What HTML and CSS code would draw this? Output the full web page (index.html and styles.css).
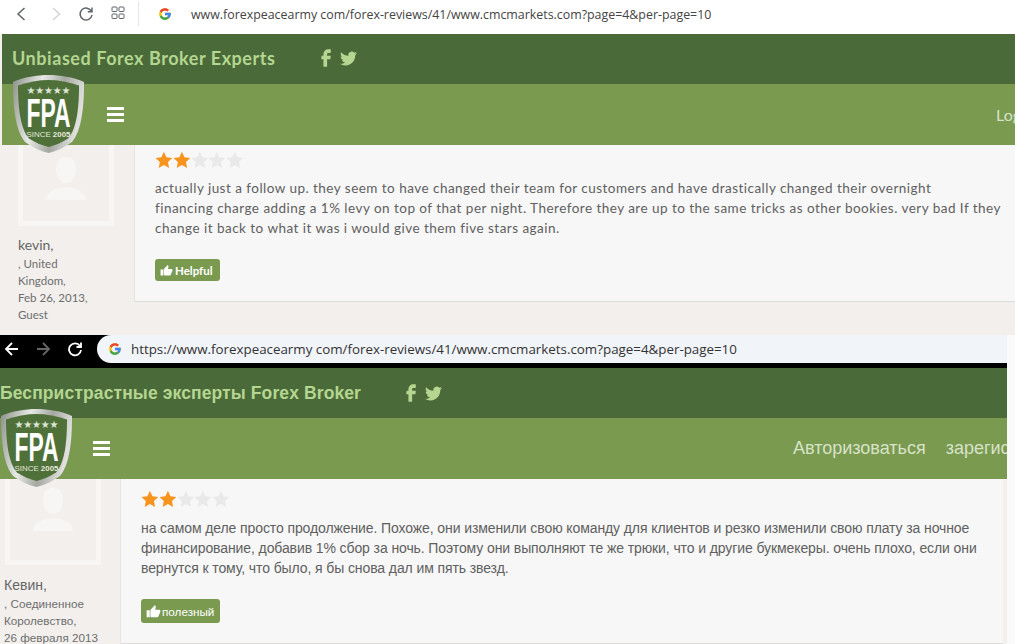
FILE: index.html
```html
<!DOCTYPE html>
<html lang="en">
<head>
<meta charset="utf-8">
<title>FPA review comparison</title>
<link rel="stylesheet" href="styles.css">
</head>
<body>
<svg class="defs" width="0" height="0" aria-hidden="true">
  <defs>
    <symbol id="star" viewBox="0 0 24 24"><path d="M12 1l3.4 7.3 7.9 1-5.8 5.5 1.5 7.9L12 18.8l-7 3.9 1.5-7.9L.7 9.3l7.9-1z"/></symbol>
    <symbol id="fb" viewBox="0 0 24 24"><path d="M9.198 21.5h4v-8.01h3.604l.396-3.98h-4V7.5a1 1 0 0 1 1-1h3v-4h-3a5 5 0 0 0-5 5v2.01h-2l-.396 3.98h2.396v8.01Z"/></symbol>
    <symbol id="tw" viewBox="0 0 24 24"><path d="M23.953 4.57a10 10 0 01-2.825.775 4.958 4.958 0 002.163-2.723c-.951.555-2.005.959-3.127 1.184a4.92 4.92 0 00-8.384 4.482C7.69 8.095 4.067 6.13 1.64 3.162a4.822 4.822 0 00-.666 2.475c0 1.71.87 3.213 2.188 4.096a4.904 4.904 0 01-2.228-.616v.06a4.923 4.923 0 003.946 4.827 4.996 4.996 0 01-2.212.085 4.936 4.936 0 004.604 3.417 9.867 9.867 0 01-6.102 2.105c-.39 0-.779-.023-1.17-.067a13.995 13.995 0 007.557 2.209c9.053 0 13.998-7.496 13.998-13.985 0-.21 0-.42-.015-.63A9.935 9.935 0 0024 4.59z"/></symbol>
    <symbol id="thumb" viewBox="0 0 24 24"><path d="M1 21h5V10H1v11zm22-10c0-1.1-.9-2-2-2h-6.3l1-4.600c0-.4-.2-.8-.4-1.100L14 2 7.600 8.600c-.4.4-.6.9-.6 1.400v9c0 1.100.9 2 2 2h9c.8 0 1.500-.5 1.800-1.200l3-7c.1-.2.2-.5.2-.7v-1.100z"/></symbol>
    <symbol id="g" viewBox="0 0 48 48">
      <path fill="#fbbc05" d="M43.611 20.083H42V20H24v8h11.303c-1.649 4.657-6.08 8-11.303 8-6.627 0-12-5.373-12-12s5.373-12 12-12c3.059 0 5.842 1.154 7.961 3.039l5.657-5.657C34.046 6.053 29.268 4 24 4 12.955 4 4 12.955 4 24s8.955 20 20 20 20-8.955 20-20c0-1.341-.138-2.65-.389-3.917z"/>
      <path fill="#ea4335" d="M6.306 14.691l6.571 4.819C14.655 15.108 18.961 12 24 12c3.059 0 5.842 1.154 7.961 3.039l5.657-5.657C34.046 6.053 29.268 4 24 4 16.318 4 9.656 8.337 6.306 14.691z"/>
      <path fill="#34a853" d="M24 44c5.166 0 9.86-1.977 13.409-5.192l-6.19-5.238A11.91 11.91 0 0124 36c-5.202 0-9.619-3.317-11.283-7.946l-6.522 5.025C9.505 39.556 16.227 44 24 44z"/>
      <path fill="#4285f4" d="M43.611 20.083H42V20H24v8h11.303a12.04 12.04 0 01-4.087 5.571l6.19 5.238C36.971 39.205 44 34 44 24c0-1.341-.138-2.65-.389-3.917z"/>
    </symbol>
    <symbol id="avatar" viewBox="0 0 60 60"><path d="M30 2c-8 0-12 6-12 15s5 17 12 17 12-8 12-17S38 2 30 2zM6 54c0-9 9-13 19-15h10c10 2 19 6 19 15z"/></symbol>
    <linearGradient id="silver" x1="0" y1="0" x2="1" y2="0.25">
      <stop offset="0" stop-color="#8b9187"/><stop offset=".4" stop-color="#e8e9e6"/><stop offset=".7" stop-color="#a4a8a1"/><stop offset="1" stop-color="#dfe0dd"/>
    </linearGradient>
  </defs>
</svg>

<section class="shot shot-en">
  <div class="browser-light">
    <svg class="ctl ctl-back" viewBox="0 0 12 16"><path d="M9.500 2L3 8l6.500 6"/></svg>
    <svg class="ctl ctl-fwd" viewBox="0 0 12 16"><path d="M3 2l6.500 6L3 14"/></svg>
    <svg class="ctl ctl-reload" viewBox="0 0 16 16"><path d="M13.500 5.500A6 6 0 1 0 14 9M14 1.500v4.200H9.800"/></svg>
    <svg class="ctl ctl-grid" viewBox="0 0 14 14"><rect x="1" y="1" width="5" height="4.500" rx=".8"/><rect x="8" y="1" width="5" height="4.500" rx=".8"/><rect x="1" y="8" width="5" height="4.500" rx=".8"/><rect x="8" y="8" width="5" height="4.500" rx=".8"/></svg>
    <span class="divider"></span>
    <svg class="gicon gicon-en"><use href="#g"/></svg>
    <span class="url url-en">www.forexpeacearmy com/forex-reviews/41/www.cmcmarkets.com?page=4&amp;per-page=10</span>
  </div>
  <div class="site site-en">
    <header class="brand">
      <span class="brand-title">Unbiased Forex Broker Experts</span>
      <svg class="social social-fb"><use href="#fb"/></svg>
      <svg class="social social-tw"><use href="#tw"/></svg>
    </header>
    <nav class="nav">
      <span class="burger"><i></i><i></i><i></i></span>
      <span class="nav-links"><span>Login</span></span>
    </nav>
    <svg class="logo" viewBox="0 0 73 80">
      <path class="logo-rim" d="M36.500 1C25 1 12 3 1 8c0 24 2 48 12 60 7 5 15 9 23.500 11C45 77 53 73 60 68c10-12 12-36 12-60C61 3 48 1 36.500 1z"/>
      <path class="logo-face" d="M36.500 6C27 6 16 8 6 11.500c0 21 2 43 11 53 6 4 13 7 19.500 8.500C43 71.500 50 68.500 56 64.500c9-10 11-32 11-53C57 8 46 6 36.500 6z"/>
      <text class="logo-stars" x="36.500" y="20" text-anchor="middle" textLength="44">★★★★★</text>
      <text class="logo-fpa" x="36.500" y="53" text-anchor="middle" textLength="44" lengthAdjust="spacingAndGlyphs">FPA</text>
      <text class="logo-since" x="36.500" y="63" text-anchor="middle" textLength="44" lengthAdjust="spacingAndGlyphs"><tspan class="logo-thin">SINCE</tspan> 2005</text>
    </svg>
    <div class="review">
      <aside class="side">
        <div class="avatar"><svg><use href="#avatar"/></svg></div>
        <div class="author">kevin,</div>
        <div class="meta">, United<br>Kingdom,<br>Feb 26, 2013,<br>Guest</div>
      </aside>
      <article class="card">
        <div class="stars">
          <svg class="on"><use href="#star"/></svg><svg class="on"><use href="#star"/></svg><svg><use href="#star"/></svg><svg><use href="#star"/></svg><svg><use href="#star"/></svg>
        </div>
        <p class="body">actually just a follow up. they seem to have changed their team for customers and have drastically changed their overnight<br>financing charge adding a 1% levy on top of that per night. Therefore they are up to the same tricks as other bookies. very bad If they<br>change it back to what it was i would give them five stars again.</p>
        <button class="helpful" type="button"><svg><use href="#thumb"/></svg>Helpful</button>
      </article>
    </div>
  </div>
</section>

<section class="shot shot-ru">
  <div class="browser-dark">
    <svg class="dctl dctl-back" viewBox="0 0 16 16"><path d="M14 8H2M8 2L2 8l6 6"/></svg>
    <svg class="dctl dctl-fwd" viewBox="0 0 16 16"><path d="M2 8h12M8 2l6 6-6 6"/></svg>
    <svg class="dctl dctl-reload" viewBox="0 0 16 16"><path d="M13 5a6 6 0 1 0 1 4M14 1.500v4.500H9.500"/></svg>
    <div class="pill">
      <svg class="gicon gicon-ru"><use href="#g"/></svg>
      <span class="url url-ru">https://www.forexpeacearmy com/forex-reviews/41/www.cmcmarkets.com?page=4&amp;per-page=10</span>
    </div>
  </div>
  <div class="site site-ru">
    <header class="brand">
      <span class="brand-title">Беспристрастные эксперты Forex Broker</span>
      <svg class="social social-fb"><use href="#fb"/></svg>
      <svg class="social social-tw"><use href="#tw"/></svg>
    </header>
    <nav class="nav">
      <span class="burger"><i></i><i></i><i></i></span>
      <span class="nav-links"><span>Авторизоваться</span><span>зарегистрироваться</span></span>
    </nav>
    <svg class="logo" viewBox="0 0 73 80">
      <path class="logo-rim" d="M36.500 1C25 1 12 3 1 8c0 24 2 48 12 60 7 5 15 9 23.500 11C45 77 53 73 60 68c10-12 12-36 12-60C61 3 48 1 36.500 1z"/>
      <path class="logo-face" d="M36.500 6C27 6 16 8 6 11.500c0 21 2 43 11 53 6 4 13 7 19.500 8.500C43 71.500 50 68.500 56 64.500c9-10 11-32 11-53C57 8 46 6 36.500 6z"/>
      <text class="logo-stars" x="36.500" y="20" text-anchor="middle" textLength="44">★★★★★</text>
      <text class="logo-fpa" x="36.500" y="53" text-anchor="middle" textLength="44" lengthAdjust="spacingAndGlyphs">FPA</text>
      <text class="logo-since" x="36.500" y="63" text-anchor="middle" textLength="44" lengthAdjust="spacingAndGlyphs"><tspan class="logo-thin">SINCE</tspan> 2005</text>
    </svg>
    <div class="review">
      <aside class="side">
        <div class="avatar"><svg><use href="#avatar"/></svg></div>
        <div class="author">Кевин,</div>
        <div class="meta">, Соединенное<br>Королевство,<br>26 февраля 2013</div>
      </aside>
      <article class="card">
        <div class="stars">
          <svg class="on"><use href="#star"/></svg><svg class="on"><use href="#star"/></svg><svg><use href="#star"/></svg><svg><use href="#star"/></svg><svg><use href="#star"/></svg>
        </div>
        <p class="body">на самом деле просто продолжение. Похоже, они изменили свою команду для клиентов и резко изменили свою плату за ночное финансирование, добавив 1% сбор за ночь. Поэтому они выполняют те же трюки, что и другие букмекеры. очень плохо, если они вернутся к тому, что было, я бы снова дал им пять звезд.</p>
        <button class="helpful" type="button"><svg><use href="#thumb"/></svg>полезный</button>
      </article>
    </div>
  </div>
</section>
</body>
</html>
```
FILE: styles.css
```css
* { box-sizing: border-box; }
html, body { margin: 0; padding: 0; }
body { width: 1015px; height: 644px; overflow: hidden; background: #fafafa; color: #555; }
.defs { position: absolute; }
.shot { position: relative; overflow: hidden; }
.shot-en { height: 335px; background: #f2efec; font-family: "Lato", "Noto Sans", sans-serif; }
.shot-ru { height: 309px; font-family: "Liberation Sans", Arial, sans-serif; }

/* light browser bar */
.browser-light { height: 34px; background: #fff; display: flex; align-items: center; padding-bottom: 6px; }
.ctl { fill: none; stroke: #5f6368; stroke-width: 1.5; flex: none; }
.ctl-back { width: 12px; height: 16px; margin-left: 15px; }
.ctl-fwd { width: 12px; height: 16px; margin-left: 23px; stroke: #d4d4d4; }
.ctl-reload { width: 16px; height: 16px; margin-left: 16px; }
.ctl-grid { width: 14px; height: 14px; margin-left: 17px; stroke-width: 1; margin-top: -2px; }
.divider { width: 1px; height: 24px; background: #e6e6e6; margin-left: 13px; }
.gicon { width: 14px; height: 14px; flex: none; }
.gicon-en { margin-left: 19px; }
.url { white-space: nowrap; color: #444; }
.url-en { margin-left: 19px; font: 12.400px "Open Sans", sans-serif; }

/* dark browser bar */
.browser-dark { height: 33px; background: #000; display: flex; align-items: flex-start; border-bottom: 5px solid #000; position: relative; width: 1007px; }
.dctl { width: 16px; height: 16px; fill: none; stroke-width: 1.800; flex: none; margin-top: 6px; }
.dctl-back { stroke: #fff; margin-left: 4px; }
.dctl-fwd { stroke: #666; margin-left: 15px; }
.dctl-reload { stroke: #fff; margin-left: 16px; }
.pill { flex: 1; height: 28px; margin-left: 14px; background: #f1f4f8; border-radius: 14px 0 0 14px; display: flex; align-items: center; }
.gicon-ru { margin-left: 11px; }
.url-ru { margin-left: 9px; font: 13.350px "Open Sans", sans-serif; color: #333; }

/* site */
.site { position: relative; }
.site-en { margin-left: 2px; }
.site-ru { width: 1007px; }
.brand { height: 50px; background: #4b6a39; display: flex; align-items: center; }
.site-en .brand { padding-bottom: 2px; }
.brand-title { color: #b4d690; font-weight: 700; white-space: nowrap; }
.site-en .brand-title { font-size: 18px; margin-left: 10px; letter-spacing: .55px; }
.site-ru .brand-title { font-size: 17.500px; letter-spacing: .11px; }
.social { fill: #b4d690; flex: none; }
.social-fb { margin-left: 40px; width: 22px; height: 22px; }
.social-tw { margin-left: 3px; width: 17px; height: 17px; }
.site-ru .social-fb { margin-left: 39px; }

.nav { height: 61px; background: #7a9a50; display: flex; align-items: center; overflow: hidden; }
.burger { width: 17px; display: flex; flex-direction: column; gap: 3px; flex: none; }
.burger i { display: block; height: 3px; background: #fff; }
.site-en .burger { margin-left: 105px; }
.site-ru .burger { margin-left: 93px; }
.nav-links { display: flex; flex: none; white-space: nowrap; color: #d7e2c8; gap: 20px; }
.site-en .nav-links { margin-left: 872px; font-size: 16px; }
.site-ru .nav-links { margin-left: 683px; font-size: 18px; }

.logo { position: absolute; width: 73px; height: 80px; }
.site-en .logo { left: 10px; top: 40px; }
.site-ru .logo { left: 0; top: 40px; }
.logo-rim { fill: url(#silver); }
.logo-face { fill: #4f7139; }
.logo-stars { fill: #dfe5d6; font: 10px "DejaVu Sans", sans-serif; }
.logo-fpa { fill: #fff; font: 700 41px "Liberation Sans", sans-serif; }
.logo-since { fill: #e4e8dc; font: 700 8px "Liberation Sans", sans-serif; }
.logo-thin { font-weight: 400; }

/* review */
.review { display: flex; background: #f2efec; }
.side { flex: none; }
.site-en .side { width: 132px; padding-left: 16px; }
.site-ru .side { width: 120px; padding-left: 4px; }
.avatar { height: 81px; width: 96px; border: 5px solid #f7f6f4; border-top: 0; display: flex; justify-content: center; align-items: flex-end; padding-bottom: 16px; }
.site-ru .avatar { height: 86px; padding-bottom: 24px; margin-left: 1px; }
.avatar svg { width: 50px; height: 50px; fill: #f7f6f4; }
.author { font-size: 14px; line-height: 18px; margin-top: 10px; color: #666; }
.meta { font-size: 11.500px; line-height: 17px; margin-top: 1px; color: #6e6e6e; white-space: nowrap; }
.site-ru .author { margin-top: 11px; }
.site-ru .meta { margin-top: 1px; font-size: 11.700px; }

.card { flex: 1; background: #f7f7f7; border-left: 1px solid #e6e3e0; border-bottom: 1px solid #dedcda; min-width: 0; }
.site-en .card { height: 157px; padding: 6px 0 0 20px; }
.site-ru .card { height: 165px; margin-right: 4px; padding: 11px 8px 0 20px; }
.stars { display: flex; height: 18px; }
.stars svg { width: 17.800px; height: 18px; fill: #e9e9e9; flex: none; }
.stars svg.on { fill: #f7941e; }
.body { margin: 0; font-size: 13.500px; line-height: 20px; color: #606060; }
.site-en .body { margin-top: 9px; letter-spacing: .47px; white-space: nowrap; }
.site-ru .body { margin-top: 10px; font-size: 14px; letter-spacing: -.1px; }
.helpful { display: flex; align-items: center; gap: 2px; background: #7a9a50; color: #fff; border: 0; border-radius: 3px; font-weight: 700; font-family: inherit; padding: 0 5px; }
.helpful svg { width: 13px; height: 13px; fill: #fff; flex: none; }
.site-en .helpful { height: 22px; width: 65px; font-size: 11.500px; margin-top: 21px; }
.site-ru .helpful { height: 24px; width: 79px; font-size: 11.700px; font-weight: 400; margin-top: 21px; gap: 1px; }
.site-ru .helpful svg { width: 15px; height: 15px; }
```
